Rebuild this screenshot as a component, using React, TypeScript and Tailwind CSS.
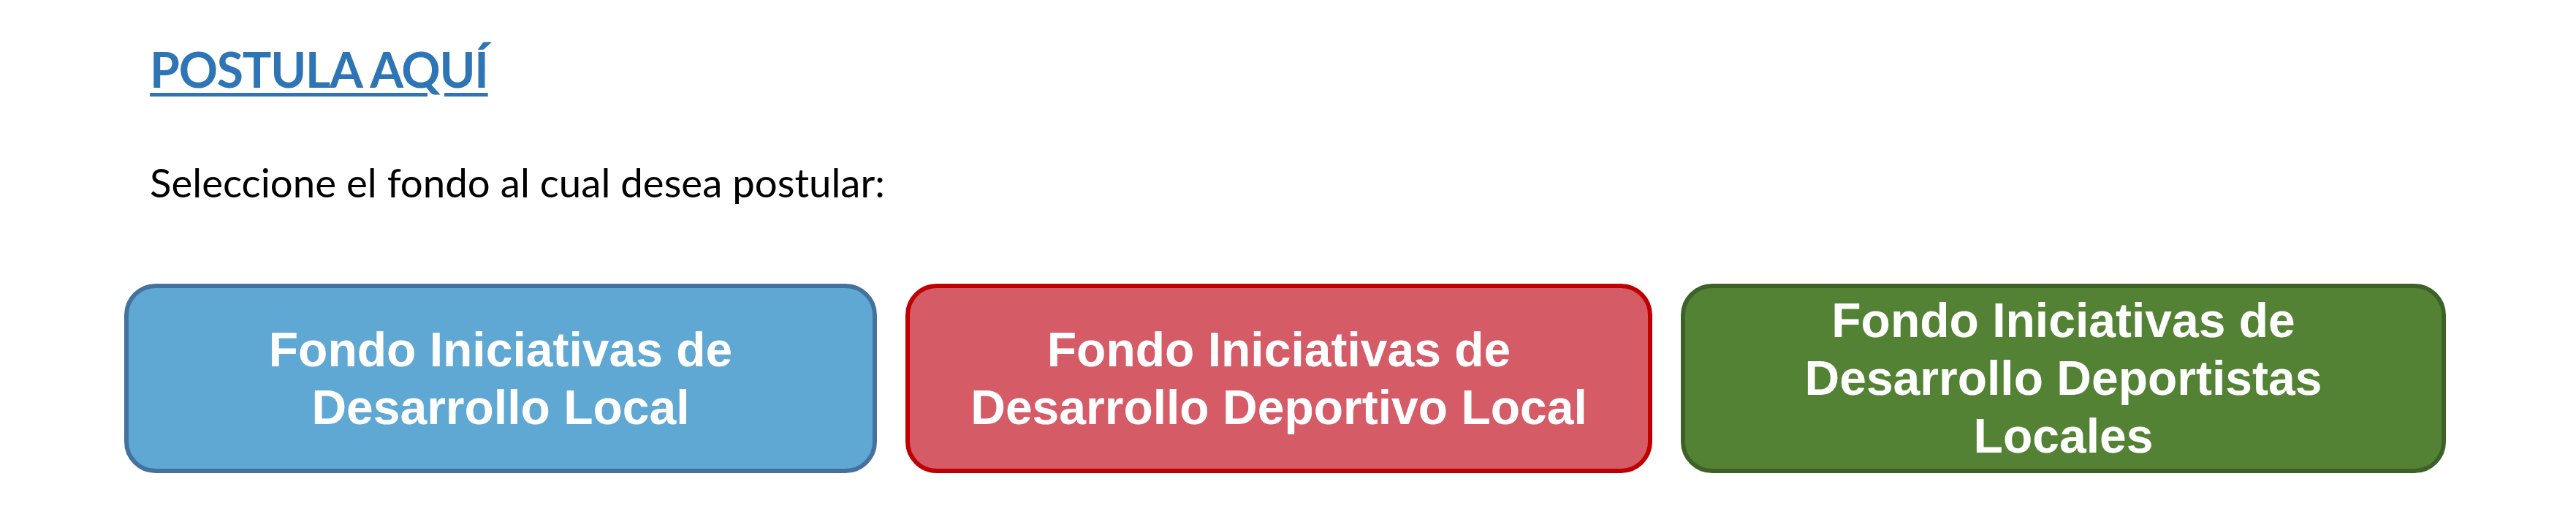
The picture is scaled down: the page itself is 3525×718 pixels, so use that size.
const funds = [
  {
    lines: ["Fondo Iniciativas de", "Desarrollo Local"],
    className: "w-[1030px] bg-[#5fa8d4] border-[#44729f]",
  },
  {
    lines: ["Fondo Iniciativas de", "Desarrollo Deportivo Local"],
    className: "w-[1022px] bg-[#d55b67] border-[#c00000]",
  },
  {
    lines: ["Fondo Iniciativas de", "Desarrollo Deportistas", "Locales"],
    className: "w-[1047px] bg-[#548235] border-[#3d6228]",
  },
];

export default function App() {
  return (
    <div className="w-[3525px] h-[718px] bg-white overflow-hidden">
      <div className="pl-[205px] pt-[62px]">
        <h1
          className="h-[66px] text-[66px] leading-none font-bold tracking-[-1.2px] text-[#2e75b6] underline decoration-[5px] underline-offset-[7px]"
          style={titleFont}
        >
          POSTULA AQUÍ
        </h1>
        <p
          className="mt-[94px] h-[54px] text-[54.6px] leading-none text-black"
          style={bodyFont}
        >
          Seleccione el fondo al cual desea postular:
        </p>
      </div>

      <div className="flex gap-[39px] pl-[170px] mt-[112px]">
        {funds.map((f, i) => (
          <button
            key={i}
            className={`h-[259px] border-[6px] rounded-[43px] flex flex-col items-center justify-center text-white font-bold text-[66px] leading-[79px] ${f.className}`}
            style={boxFont}
          >
            {f.lines.map((l) => (
              <span key={l}>{l}</span>
            ))}
          </button>
        ))}
      </div>
    </div>
  );
}

const titleFont = {
  fontFamily: "Lato, 'Open Sans', sans-serif",
};

const bodyFont = {
  fontFamily: "Lato, 'Open Sans', sans-serif",
};

const boxFont = {
  fontFamily: "'Liberation Sans', Arial, sans-serif",
};
